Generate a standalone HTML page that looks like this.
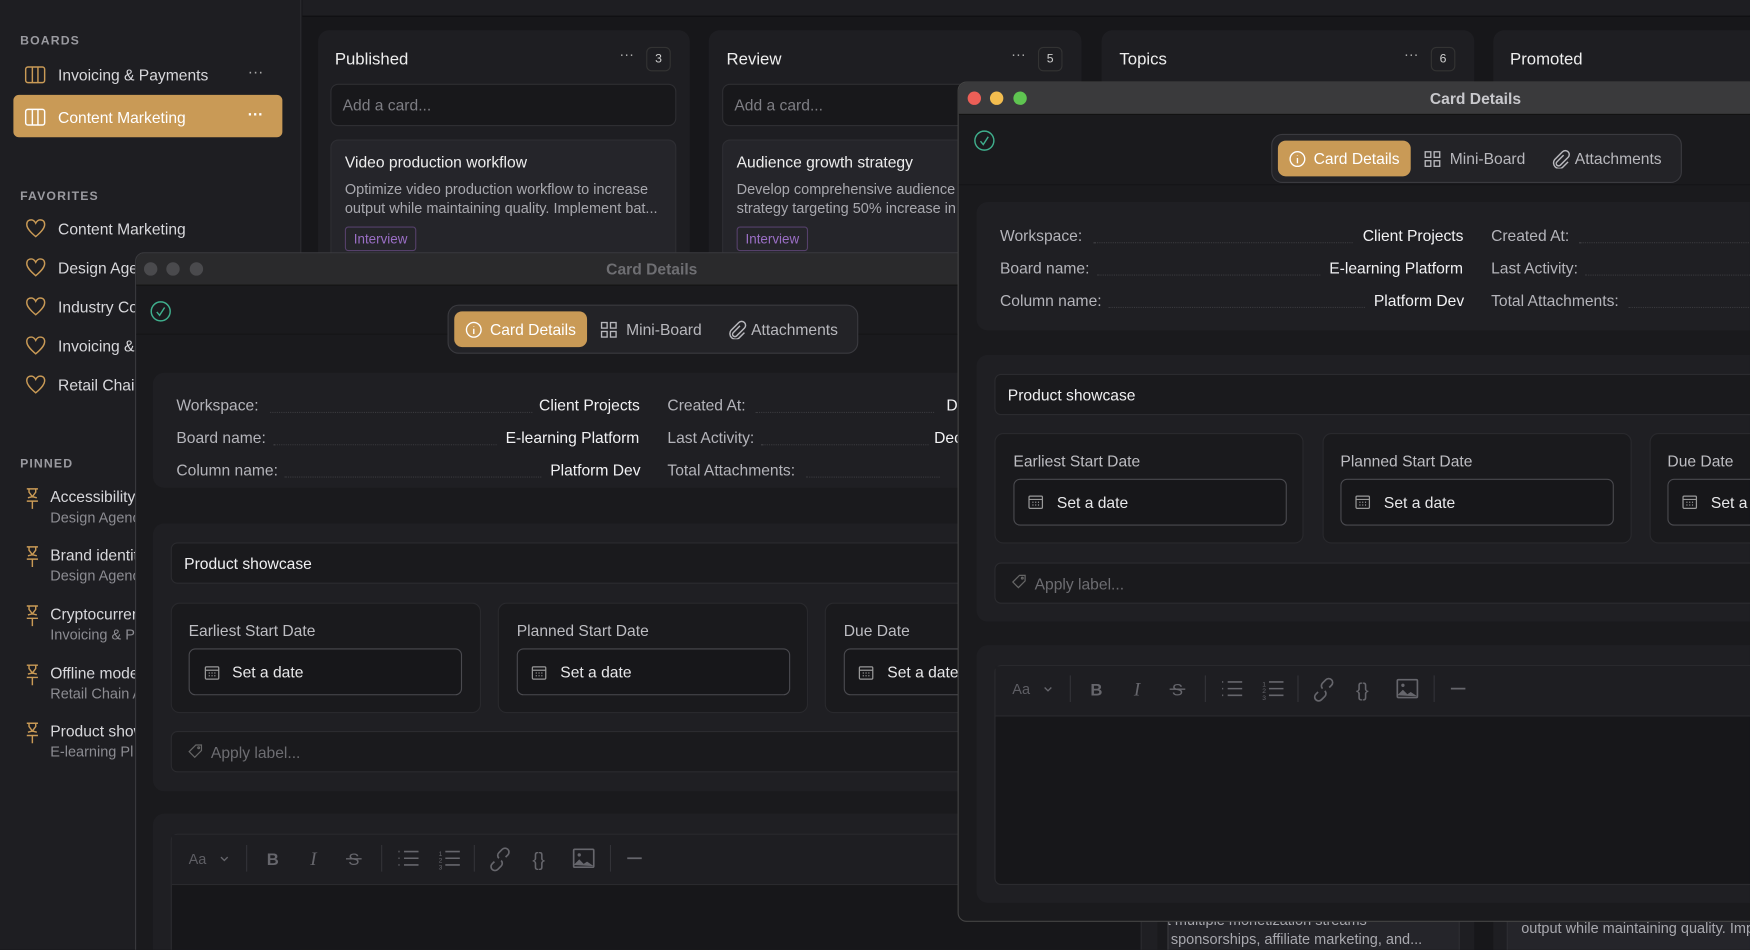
<!DOCTYPE html>
<html><head><meta charset="utf-8"><style>
*{box-sizing:border-box;margin:0;padding:0}
html,body{width:1750px;height:950px;overflow:hidden;background:#17171a}
#s{position:absolute;left:0;top:0;width:1568px;height:851px;transform:scale(1.11607);transform-origin:0 0;font-family:"Liberation Sans",sans-serif;color:#e6e6e8;overflow:hidden;background:#17171a}
.a{position:absolute}
.sb{left:0;top:0;width:270px;height:851px;background:#1e1e22;border-right:1px solid #2c2c30}
.h{font-size:11px;font-weight:bold;letter-spacing:1px;color:#9a9aa0}
.it{font-size:14px;color:#d8d8dc;white-space:nowrap}
.sub{font-size:13px;color:#8c8c92;white-space:nowrap}
.col{background:#1e1e22;border-radius:10px;top:27px;height:900px}
.ct{font-size:15px;color:#eee}
.badge{width:22px;height:22px;border:1px solid #333;border-radius:5px;font-size:11px;color:#ccc;text-align:center;line-height:20px}
.add{height:38px;border:1px solid #2e2e32;border-radius:7px;background:#18181b;color:#7e7e84;font-size:14px;padding:10px}
.card{background:#25252a;border:1px solid #2e2e33;border-radius:7px;padding:11px 12px}
.tag{display:inline-block;border:1px solid #55406a;color:#9b6fc6;font-size:12px;padding:3px 7px;border-radius:3px;margin-top:8px}
.win{background:#1a1a1d;border:1px solid #3a3a3e;border-radius:8px;overflow:hidden}
.tb{height:29px;text-align:center;font-size:14px;font-weight:bold;line-height:28px;border-bottom:1px solid #111}
.dot{width:12px;height:12px;border-radius:6px;top:8px}
.seg{height:44px;background:#232327;border:1px solid #3a3a3f;border-radius:10px}
.segon{background:#c99a56;border-radius:7px;color:#fff;height:32px;top:5px;font-size:14px;line-height:32px}
.segi{font-size:14px;color:#b8b8bd;top:5px;line-height:32px;white-space:nowrap}
.pan{background:#1f1f23;border-radius:10px}
.row{font-size:14px;color:#b4b4ba;white-space:nowrap}
.val{color:#f2f2f4}
.dots{border-bottom:1px dotted #3a3a3e;height:1px}
.inp{background:#1a1a1d;border:1px solid #2b2b2f;border-radius:6px}
.dc{background:#1a1a1d;border:1px solid #29292d;border-radius:8px}
.dl{font-size:14px;color:#bdbdc2}
.dbtn{border:1px solid #4a4a4f;border-radius:6px;background:#17171a;font-size:14px;color:#e8e8ea;padding:0 0 0 38px;line-height:40px}
.ph{color:#6d6d72;font-size:14px}
</style></head><body><div id="s">
<svg width="0" height="0" style="position:absolute"><defs>
<g id="tbar" fill="none" stroke="#66666c" stroke-width="1.5">
 <text x="0" y="14" fill="#5e5e64" stroke="none" font-size="13" font-family="Liberation Sans">Aa</text>
 <path d="M29 8l3 3 3-3" stroke-width="1.2"/>
 <path d="M52 -3v26M173 -3v26M256 -3v26M378 -3v26" stroke="#333338" stroke-width="1"/>
 <text x="70" y="15" fill="#66666c" stroke="none" font-size="15" font-weight="bold" font-family="Liberation Sans">B</text>
 <text x="109" y="15" fill="#66666c" stroke="none" font-size="17" font-style="italic" font-family="Liberation Serif">I</text>
 <text x="143" y="15" fill="#66666c" stroke="none" font-size="15" font-family="Liberation Sans">S</text>
 <path d="M141 9.5h14" stroke-width="1.2"/>
 <path d="M188 3h1M188 9h1M188 15h1M193 3h13M193 9h13M193 15h13" stroke-width="1.4"/>
 <path d="M230 3h13M230 9h13M230 15h13" stroke-width="1.4"/>
 <text x="224" y="7" fill="#66666c" stroke="none" font-size="6">1</text><text x="224" y="13" fill="#66666c" stroke="none" font-size="6">2</text><text x="224" y="19" fill="#66666c" stroke="none" font-size="6">3</text>
 <path d="M274 12l-2 2a3.5 3.5 0 0 0 5 5l3-3a3.5 3.5 0 0 0 0-5M284 8l2-2a3.5 3.5 0 0 0-5-5l-3 3a3.5 3.5 0 0 0 0 5"/>
 <text x="308" y="16" fill="#66666c" stroke="none" font-size="17" font-family="Liberation Sans">{}</text>
 <rect x="345" y="1" width="18" height="16" rx="1"/><path d="M345 15l5-5 4 4 3-2 6 4" fill="#66666c" stroke="none"/><circle cx="350" cy="6" r="1.5" fill="#66666c" stroke="none"/>
 <path d="M393 9h13"/>
</g>
<g id="clip" fill="none" stroke="#b8b8bd" stroke-width="1.3"><path d="M11 5l-6 6a2 2 0 0 0 3 3l7-7a3.5 3.5 0 0 0-5-5l-7 7a5 5 0 0 0 7 7l5-5"/></g>
<g id="cal" fill="none" stroke="#999" stroke-width="1.1"><rect x="1" y="1.5" width="12" height="11" rx="1"/><path d="M1 4.5h12M4 7h1M6.5 7h1M9 7h1M4 9.5h1M6.5 9.5h1M9 9.5h1"/></g>
</defs></svg>
<!-- sidebar -->
<div class="a sb">
 <div class="a h" style="left:18px;top:31px">BOARDS</div>
 <svg class="a" style="left:22px;top:59px" width="19" height="16" viewBox="0 0 19 16"><rect x="1" y="1" width="17" height="14" rx="2" fill="none" stroke="#c99a56" stroke-width="1.3"/><path d="M7 1v14M12 1v14" stroke="#c99a56" stroke-width="1.3"/></svg>
 <div class="a it" style="left:52px;top:59px">Invoicing &amp; Payments</div>
 <div class="a it" style="left:222px;top:56px;color:#aaa">···</div>
 <div class="a" style="left:12px;top:85px;width:241px;height:38px;background:#c99a56;border-radius:5px"></div>
 <svg class="a" style="left:22px;top:97px" width="19" height="16" viewBox="0 0 19 16"><rect x="1" y="1" width="17" height="14" rx="2" fill="none" stroke="#fff" stroke-width="1.3"/><path d="M7 1v14M12 1v14" stroke="#fff" stroke-width="1.3"/></svg>
 <div class="a it" style="left:52px;top:97px;color:#fff">Content Marketing</div>
 <div class="a it" style="left:222px;top:94px;color:#fff;font-weight:bold">···</div>
 <div class="a h" style="left:18px;top:170px">FAVORITES</div>
 <div class="a it" style="left:52px;top:197px">Content Marketing</div>
 <div class="a it" style="left:52px;top:232px">Design Agency</div>
 <div class="a it" style="left:52px;top:267px">Industry Co</div>
 <div class="a it" style="left:52px;top:302px">Invoicing &amp;</div>
 <div class="a it" style="left:52px;top:337px">Retail Chain</div>
 <div class="a h" style="left:18px;top:410px">PINNED</div>
 <div class="a it" style="left:45px;top:437px">Accessibility</div><div class="a sub" style="left:45px;top:456px">Design Agency</div>
 <div class="a it" style="left:45px;top:489px">Brand identity</div><div class="a sub" style="left:45px;top:508px">Design Agency</div>
 <div class="a it" style="left:45px;top:542px">Cryptocurrency</div><div class="a sub" style="left:45px;top:561px">Invoicing &amp; P</div>
 <div class="a it" style="left:45px;top:595px">Offline mode</div><div class="a sub" style="left:45px;top:614px">Retail Chain A</div>
 <div class="a it" style="left:45px;top:647px">Product showcase</div><div class="a sub" style="left:45px;top:666px">E-learning Pl</div>
</div>
<svg class="a" style="left:22px;top:195px" width="20" height="160" viewBox="0 0 20 160" fill="none" stroke="#c99a56" stroke-width="1.3">
 <g id="hr"><path d="M10 17 C4 12 2 9 2 6 C2 3 4 2 6 2 C8 2 9 3 10 5 C11 3 12 2 14 2 C16 2 18 3 18 6 C18 9 16 12 10 17Z"/></g>
 <use href="#hr" y="35"/><use href="#hr" y="70"/><use href="#hr" y="105"/><use href="#hr" y="140"/>
</svg>
<svg class="a" style="left:21px;top:437px" width="16" height="240" viewBox="0 0 16 240" fill="none" stroke="#c99a56" stroke-width="1.3">
 <g id="pn"><path d="M3 1h10M5 1v3l3 4 3-4V1M4 9l4-1 4 1M3 12h10M8 12v7"/></g>
 <use href="#pn" y="52"/><use href="#pn" y="105"/><use href="#pn" y="158"/><use href="#pn" y="210"/>
</svg>
<!-- top strip -->
<div class="a" style="left:271px;top:0;width:1297px;height:15px;background:#1e1e22;border-bottom:1px solid #0e0e10"></div>
<!-- columns -->
<div class="a col" style="left:285px;width:333px">
 <div class="a ct" style="left:15px;top:18px">Published</div>
 <div class="a" style="left:270px;top:14px;color:#aaa;font-size:13px">···</div>
 <div class="a badge" style="left:294px;top:15px">3</div>
 <div class="a add" style="left:11px;top:48px;width:310px">Add a card...</div>
 <div class="a card" style="left:11px;top:98px;width:310px;height:120px">
  <div style="font-size:14px;color:#eee">Video production workflow</div>
  <div style="font-size:13px;color:#a8a8ae;line-height:17px;margin-top:8px">Optimize video production workflow to increase<br>output while maintaining quality. Implement bat...</div>
  <span class="tag">Interview</span></div>
</div>
<div class="a col" style="left:635px;width:334px">
 <div class="a ct" style="left:16px;top:18px">Review</div>
 <div class="a" style="left:271px;top:14px;color:#aaa;font-size:13px">···</div>
 <div class="a badge" style="left:295px;top:15px">5</div>
 <div class="a add" style="left:12px;top:48px;width:310px">Add a card...</div>
 <div class="a card" style="left:12px;top:98px;width:310px;height:120px">
  <div style="font-size:14px;color:#eee">Audience growth strategy</div>
  <div style="font-size:13px;color:#a8a8ae;line-height:17px;margin-top:8px;white-space:nowrap">Develop comprehensive audience growth<br>strategy targeting 50% increase in</div>
  <span class="tag">Interview</span></div>
</div>
<div class="a col" style="left:987px;width:334px">
 <div class="a ct" style="left:16px;top:18px">Topics</div>
 <div class="a" style="left:271px;top:14px;color:#aaa;font-size:13px">···</div>
 <div class="a badge" style="left:295px;top:15px">6</div>
 <div class="a card" style="left:31px;top:770px;width:290px;height:90px;font-size:13px;color:#a8a8ae;padding-top:18px;line-height:17px;white-space:nowrap">ent multiple monetization streams<br>ng sponsorships, affiliate marketing, and...</div>
</div>
<div class="a col" style="left:1338px;width:240px">
 <div class="a ct" style="left:15px;top:18px">Promoted</div>
 <div class="a card" style="left:12px;top:770px;width:240px;height:90px;font-size:13px;color:#a8a8ae;padding-top:26px;white-space:nowrap">output while maintaining quality. Imp</div>
</div>

<!-- window A -->
<div class="a win" style="left:121px;top:226px;width:926px;height:640px">
 <div class="tb" style="background:#2a2a2c;color:#6e6e72">Card Details</div>
 <div class="a dot" style="left:7px;background:#4a4a4d"></div><div class="a dot" style="left:27px;background:#4a4a4d"></div><div class="a dot" style="left:48px;background:#4a4a4d"></div>
 <svg class="a" style="left:12px;top:42px" width="20" height="20" viewBox="0 0 20 20" fill="none" stroke="#3fae8c" stroke-width="1.3"><circle cx="10" cy="10" r="8.5"/><path d="M6.5 10.5l2.5 3 4.5-7"/></svg>
 <div class="a" style="left:0;top:72px;width:926px;height:1px;background:#151517"></div>
 <div class="a seg" style="left:279px;top:46px;width:368px"></div>
 <div class="a segon" style="left:285px;top:52px;width:119px;padding-left:32px">Card Details</div>
 <svg class="a" style="left:295px;top:61px" width="15" height="15" viewBox="0 0 16 16" fill="none" stroke="#fff" stroke-width="1.3"><circle cx="8" cy="8" r="7"/><path d="M8 7v5M8 4.5v.5"/></svg>
 <svg class="a" style="left:416px;top:61px" width="15" height="15" viewBox="0 0 15 15" fill="none" stroke="#b8b8bd" stroke-width="1.2"><rect x="1" y="1" width="5" height="5"/><rect x="9" y="1" width="5" height="5"/><rect x="1" y="9" width="5" height="5"/><rect x="9" y="9" width="5" height="5"/></svg>
 <div class="a segi" style="left:439px;top:52px">Mini-Board</div>
 <svg class="a" style="left:530px;top:60px" width="17" height="17" viewBox="0 0 17 17"><use href="#clip"/></svg>
 <div class="a segi" style="left:551px;top:52px">Attachments</div>
 <div class="a pan" style="left:15px;top:107px;width:900px;height:103px"></div>
 <div class="a row" style="left:36px;top:128px">Workspace:</div><div class="a dots" style="left:120px;top:142px;width:235px"></div><div class="a row val" style="left:361px;top:128px">Client Projects</div>
 <div class="a row" style="left:36px;top:157px">Board name:</div><div class="a dots" style="left:123px;top:171px;width:200px"></div><div class="a row val" style="left:331px;top:157px">E-learning Platform</div>
 <div class="a row" style="left:36px;top:186px">Column name:</div><div class="a dots" style="left:133px;top:200px;width:230px"></div><div class="a row val" style="left:371px;top:186px">Platform Dev</div>
 <div class="a row" style="left:476px;top:128px">Created At:</div><div class="a dots" style="left:555px;top:142px;width:160px"></div><div class="a row val" style="left:726px;top:128px">D</div>
 <div class="a row" style="left:476px;top:157px">Last Activity:</div><div class="a dots" style="left:560px;top:171px;width:150px"></div><div class="a row val" style="left:715px;top:157px">Dec</div>
 <div class="a row" style="left:476px;top:186px">Total Attachments:</div><div class="a dots" style="left:600px;top:200px;width:120px"></div>
 <div class="a pan" style="left:15px;top:242px;width:900px;height:240px"></div>
 <div class="a inp" style="left:31px;top:259px;width:870px;height:37px;font-size:14px;color:#f0f0f2;padding:10px 11px">Product showcase</div>
 <div class="a dc" style="left:31px;top:313px;width:278px;height:99px"></div>
 <div class="a dc" style="left:324px;top:313px;width:278px;height:99px"></div>
 <div class="a dc" style="left:617px;top:313px;width:278px;height:99px"></div>
 <div class="a dl" style="left:47px;top:330px">Earliest Start Date</div>
 <div class="a dl" style="left:341px;top:330px">Planned Start Date</div>
 <div class="a dl" style="left:634px;top:330px">Due Date</div>
 <div class="a dbtn" style="left:47px;top:354px;width:245px;height:42px">Set a date</div>
 <div class="a dbtn" style="left:341px;top:354px;width:245px;height:42px">Set a date</div>
 <div class="a dbtn" style="left:634px;top:354px;width:245px;height:42px">Set a date</div>
 <div class="a inp" style="left:31px;top:428px;width:870px;height:37px;padding:10px 0 0 35px"><span class="ph">Apply label...</span></div>
 <div class="a pan" style="left:15px;top:502px;width:900px;height:200px"></div>
 <div class="a inp" style="left:31px;top:520px;width:870px;height:200px;background:#17171a"></div>
 <div class="a" style="left:32px;top:521px;width:868px;height:45px;background:#1e1e22;border-bottom:1px solid #2a2a2e"></div>
 <svg class="a" style="left:47px;top:530px" width="430" height="24" viewBox="0 -3 430 24"><use href="#tbar"/></svg>
</div>
<svg class="a" style="left:183px;top:596px" width="14" height="14"><use href="#cal"/></svg>
<svg class="a" style="left:476px;top:596px" width="14" height="14"><use href="#cal"/></svg>
<svg class="a" style="left:769px;top:596px" width="14" height="14"><use href="#cal"/></svg>
<svg class="a" style="left:168px;top:666px" width="14" height="14" viewBox="0 0 14 14" fill="none" stroke="#666" stroke-width="1.1"><path d="M7.5 1.5h5v5l-6 6-5-5z"/><circle cx="10" cy="4" r=".8"/></svg>

<!-- window B -->
<div class="a win" style="left:858px;top:73px;width:928px;height:753px;border-color:#444">
 <div class="tb" style="background:#3a3a3c;color:#c8c8cc">Card Details</div>
 <div class="a dot" style="left:8px;background:#ec5f57"></div><div class="a dot" style="left:28px;background:#f3bd4f"></div><div class="a dot" style="left:49px;background:#5fc451"></div>
 <svg class="a" style="left:13px;top:42px" width="20" height="20" viewBox="0 0 20 20" fill="none" stroke="#3fae8c" stroke-width="1.3"><circle cx="10" cy="10" r="8.5"/><path d="M6.5 10.5l2.5 3 4.5-7"/></svg>
 <div class="a" style="left:0;top:91px;width:928px;height:1px;background:#151517"></div>
 <div class="a seg" style="left:280px;top:46px;width:368px"></div>
 <div class="a segon" style="left:286px;top:52px;width:119px;padding-left:32px">Card Details</div>
 <svg class="a" style="left:296px;top:61px" width="15" height="15" viewBox="0 0 16 16" fill="none" stroke="#fff" stroke-width="1.3"><circle cx="8" cy="8" r="7"/><path d="M8 7v5M8 4.5v.5"/></svg>
 <svg class="a" style="left:417px;top:61px" width="15" height="15" viewBox="0 0 15 15" fill="none" stroke="#b8b8bd" stroke-width="1.2"><rect x="1" y="1" width="5" height="5"/><rect x="9" y="1" width="5" height="5"/><rect x="1" y="9" width="5" height="5"/><rect x="9" y="9" width="5" height="5"/></svg>
 <div class="a segi" style="left:440px;top:52px">Mini-Board</div>
 <svg class="a" style="left:531px;top:60px" width="17" height="17" viewBox="0 0 17 17"><use href="#clip"/></svg>
 <div class="a segi" style="left:552px;top:52px">Attachments</div>
 <div class="a pan" style="left:16px;top:107px;width:900px;height:115px"></div>
 <div class="a row" style="left:37px;top:129px">Workspace:</div><div class="a dots" style="left:121px;top:143px;width:232px"></div><div class="a row val" style="left:362px;top:129px">Client Projects</div>
 <div class="a row" style="left:37px;top:158px">Board name:</div><div class="a dots" style="left:124px;top:172px;width:200px"></div><div class="a row val" style="left:332px;top:158px">E-learning Platform</div>
 <div class="a row" style="left:37px;top:187px">Column name:</div><div class="a dots" style="left:134px;top:201px;width:230px"></div><div class="a row val" style="left:372px;top:187px">Platform Dev</div>
 <div class="a row" style="left:477px;top:129px">Created At:</div><div class="a dots" style="left:556px;top:143px;width:160px"></div>
 <div class="a row" style="left:477px;top:158px">Last Activity:</div><div class="a dots" style="left:561px;top:172px;width:160px"></div>
 <div class="a row" style="left:477px;top:187px">Total Attachments:</div><div class="a dots" style="left:600px;top:201px;width:120px"></div>
 <div class="a pan" style="left:16px;top:244px;width:900px;height:239px"></div>
 <div class="a inp" style="left:32px;top:261px;width:880px;height:37px;font-size:14px;color:#f0f0f2;padding:10px 11px">Product showcase</div>
 <div class="a dc" style="left:32px;top:314px;width:277px;height:99px"></div>
 <div class="a dc" style="left:326px;top:314px;width:277px;height:99px"></div>
 <div class="a dc" style="left:619px;top:314px;width:277px;height:99px"></div>
 <div class="a dl" style="left:49px;top:331px">Earliest Start Date</div>
 <div class="a dl" style="left:342px;top:331px">Planned Start Date</div>
 <div class="a dl" style="left:635px;top:331px">Due Date</div>
 <div class="a dbtn" style="left:49px;top:355px;width:245px;height:42px">Set a date</div>
 <div class="a dbtn" style="left:342px;top:355px;width:245px;height:42px">Set a date</div>
 <div class="a dbtn" style="left:635px;top:355px;width:245px;height:42px">Set a date</div>
 <div class="a inp" style="left:32px;top:430px;width:880px;height:37px;padding:10px 0 0 35px"><span class="ph">Apply label...</span></div>
 <div class="a pan" style="left:16px;top:504px;width:900px;height:231px"></div>
 <div class="a inp" style="left:32px;top:522px;width:880px;height:197px;background:#17171a"></div>
 <div class="a" style="left:33px;top:523px;width:878px;height:45px;background:#1e1e22;border-bottom:1px solid #2a2a2e"></div>
 <svg class="a" style="left:48px;top:531px" width="430" height="24" viewBox="0 -3 430 24"><use href="#tbar"/></svg>
</div>
<svg class="a" style="left:921px;top:443px" width="14" height="14"><use href="#cal"/></svg>
<svg class="a" style="left:1214px;top:443px" width="14" height="14"><use href="#cal"/></svg>
<svg class="a" style="left:1507px;top:443px" width="14" height="14"><use href="#cal"/></svg>
<svg class="a" style="left:906px;top:514px" width="14" height="14" viewBox="0 0 14 14" fill="none" stroke="#666" stroke-width="1.1"><path d="M7.5 1.5h5v5l-6 6-5-5z"/><circle cx="10" cy="4" r=".8"/></svg>
</div></body></html>
